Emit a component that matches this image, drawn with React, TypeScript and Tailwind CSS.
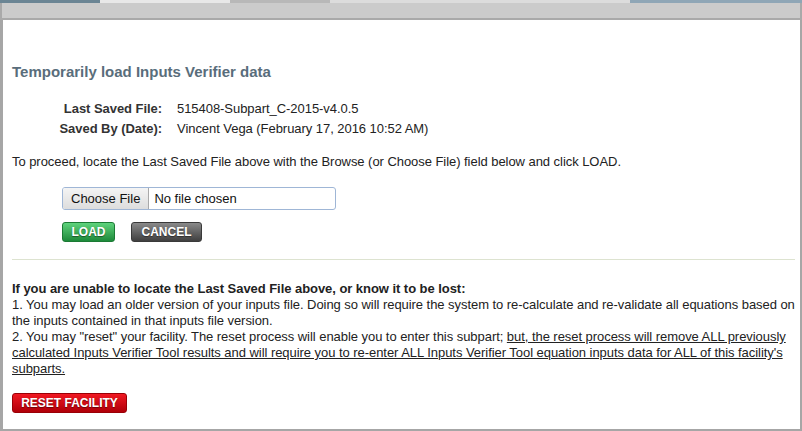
const FONT = { fontFamily: '"Liberation Sans", Arial, sans-serif' };

function GradButton({ label, tone }: { label: string; tone: "green" | "gray" | "red" }) {
  const tones = {
    green: "w-[53px] bg-gradient-to-b from-[#5ed37c] to-[#1c8a3a] border-[#1b7a34]",
    gray: "w-[71px] bg-gradient-to-b from-[#8a8a8a] to-[#404040] border-[#3a3a3a]",
    red: "w-[115px] bg-gradient-to-b from-[#f01822] to-[#b00008] border-[#9a0006]",
  };
  return (
    <button
      className={`h-[20px] rounded-[3px] border text-[12px] font-bold leading-none text-white [text-shadow:0_1px_1px_rgba(0,0,0,0.45)] ${tones[tone]}`}
    >
      {label}
    </button>
  );
}

export default function App() {
  return (
    <div className="w-[802px] h-[431px] overflow-hidden bg-white flex flex-col text-[#222]" style={FONT}>
      {/* top edge of the page behind the dialog */}
      <div className="h-[3px] flex shrink-0">
        <div className="w-[100px] bg-[#6b8594]" />
        <div className="w-[130px] bg-[#e8e8e8]" />
        <div className="w-[100px] bg-[#b8b8b8]" />
        <div className="w-[300px] bg-[#dcdcdc]" />
        <div className="flex-1 bg-[#8fa6b6]" />
      </div>
      {/* title bar */}
      <div className="h-[17px] shrink-0 bg-[#cbcbcb] border-b-[2px] border-[#a9a9a9] border-l-[2px] border-r-[2px]" />

      <div className="flex-1 border-l-[3px] border-r-[2px] border-b-[2px] border-[#a6a6a6] pl-[9px] pr-[5px] tracking-[-0.05px]">
        <h2 className="mt-[43px] text-[15px] font-bold text-[#596d7b] leading-[17px] tracking-normal">
          Temporarily load Inputs Verifier data
        </h2>

        <div className="mt-[19px] flex flex-col text-[13px] leading-[20px]">
          <div className="flex">
            <span className="w-[150px] text-right font-bold text-[#333]">Last Saved File:</span>
            <span className="ml-[15px]">515408-Subpart_C-2015-v4.0.5</span>
          </div>
          <div className="flex">
            <span className="w-[150px] text-right font-bold text-[#333]">Saved By (Date):</span>
            <span className="ml-[15px]">Vincent Vega (February 17, 2016 10:52 AM)</span>
          </div>
        </div>

        <p className="mt-[15px] text-[13px] leading-[16px]">
          To proceed, locate the Last Saved File above with the Browse (or Choose File) field below and click LOAD.
        </p>

        <div className="ml-[50px] mt-[17px] flex w-[274px] h-[23px] items-stretch rounded-[3px] border border-[#9fb6d6] bg-white text-[13px] tracking-normal">
          <span className="flex items-center px-[8px] bg-gradient-to-b from-[#f4f4f4] to-[#dddddd] border-r border-[#a9a9a9] rounded-l-[2px] text-[#111]">
            Choose File
          </span>
          <span className="flex items-center pl-[5px] text-[#111]">No file chosen</span>
        </div>

        <div className="ml-[50px] mt-[12px] flex gap-[16px] tracking-normal">
          <GradButton label="LOAD" tone="green" />
          <GradButton label="CANCEL" tone="gray" />
        </div>

        <hr className="mt-[17px] border-0 border-t border-[#dde3d0]" />

        <div className="mt-[21px] text-[13px] leading-[16px]">
          <p className="font-bold text-[#222]">
            If you are unable to locate the Last Saved File above, or know it to be lost:
          </p>
          <p>
            1. You may load an older version of your inputs file. Doing so will require the system to re-calculate and
            re-validate all equations based on the inputs contained in that inputs file version.
          </p>
          <p>
            2. You may "reset" your facility. The reset process will enable you to enter this subpart;{" "}
            <span className="underline">
              but, the reset process will remove ALL previously calculated Inputs Verifier Tool results and will require
              you to re-enter ALL Inputs Verifier Tool equation inputs data for ALL of this facility's subparts.
            </span>
          </p>
        </div>

        <div className="mt-[13px] tracking-normal">
          <GradButton label="RESET FACILITY" tone="red" />
        </div>
      </div>
    </div>
  );
}
